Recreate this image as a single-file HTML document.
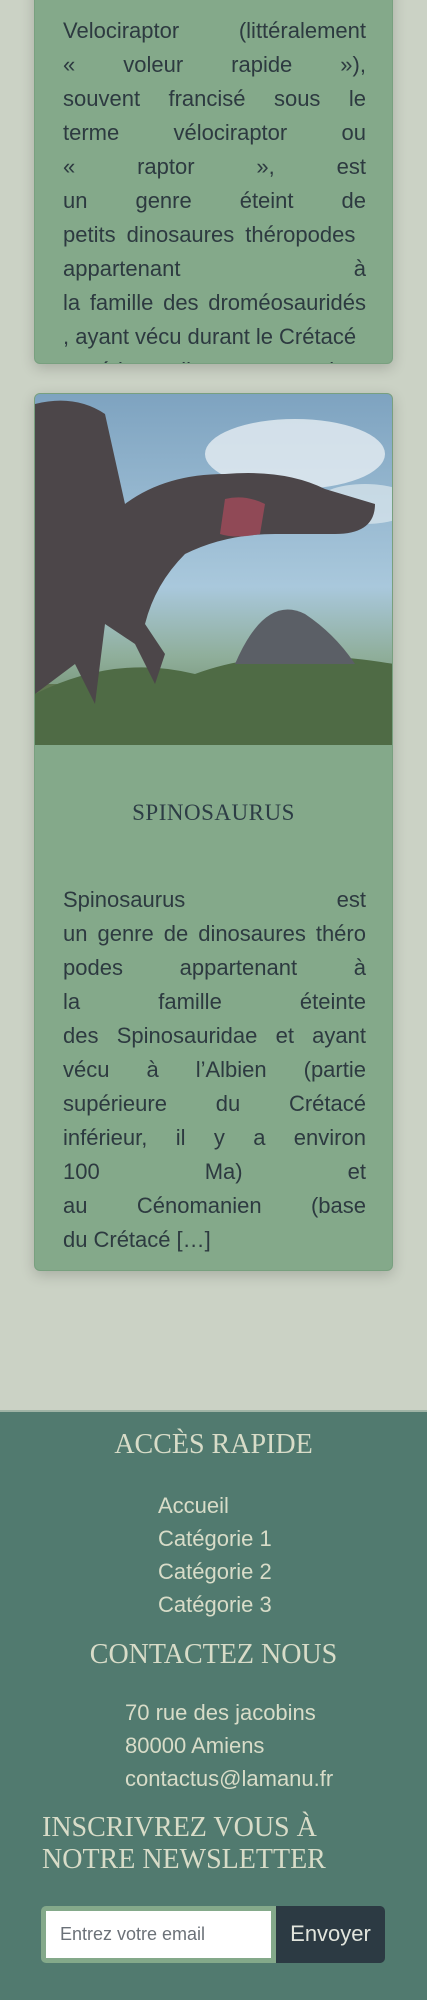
<!DOCTYPE html>
<html><head><meta charset="utf-8"><style>
*{margin:0;padding:0;box-sizing:border-box}
body{width:427px;height:2000px;background:#cbd2c5;font-family:"Liberation Sans",sans-serif;position:relative;overflow:hidden;color:#2d3a40}
.card{position:absolute;left:34px;width:359px;background:#84a98a;border:1px solid #78a07f;border-radius:6px;box-shadow:0 4px 14px rgba(0,0,0,.18);overflow:hidden}
.txt{position:absolute;left:28px;width:303px;font-size:22px;line-height:34px}
.txt div{white-space:nowrap;display:flex;justify-content:space-between}
.txt div.l{justify-content:flex-start;gap:11px}
.serif{font-family:"Liberation Serif",serif;letter-spacing:.5px}
footer{position:absolute;left:0;top:1410px;width:427px;height:590px;background:#517a6f;border-top:2px solid #9fb3a5;color:#d8dcc8}
footer h2{font-family:"Liberation Serif",serif;font-weight:normal;font-size:28px;position:absolute;white-space:nowrap;line-height:31px}
.lk{position:absolute;font-size:22px;line-height:33px}
</style></head><body>
<div class="card" style="top:-20px;height:384px">
 <div class="txt" style="top:33px">
  <div><span>Velociraptor</span><span>(littéralement</span></div>
  <div><span>«</span><span>voleur</span><span>rapide</span><span>»),</span></div>
  <div><span>souvent</span><span>francisé</span><span>sous</span><span>le</span></div>
  <div><span>terme</span><span>vélociraptor</span><span>ou</span></div>
  <div><span>«</span><span>raptor</span><span>»,</span><span>est</span></div>
  <div><span>un</span><span>genre</span><span>éteint</span><span>de</span></div>
  <div class="l"><span>petits</span><span>dinosaures</span><span>théropodes</span></div>
  <div><span>appartenant</span><span>à</span></div>
  <div><span>la</span><span>famille</span><span>des</span><span>droméosauridés</span></div>
  <div class="l" style="gap:6px"><span>, ayant</span><span>vécu</span><span>durant</span><span>le</span><span>Crétacé</span></div>
  <div><span>supérieur</span><span>il</span><span>y</span><span>a</span><span>environ</span></div>
 </div>
</div>
<div class="card" style="top:393px;height:878px">
 <svg width="359" height="351" viewBox="0 0 359 351" style="display:block">
  <defs><linearGradient id="s" x1="0" y1="0" x2="0" y2="1"><stop offset="0" stop-color="#7ea3c0"/><stop offset=".55" stop-color="#a9c8dc"/><stop offset=".75" stop-color="#8fae9a"/><stop offset="1" stop-color="#5e7a55"/></linearGradient></defs>
  <rect width="359" height="351" fill="url(#s)"/>
  <ellipse cx="260" cy="60" rx="90" ry="35" fill="#e6eef2" opacity=".8"/>
  <ellipse cx="330" cy="110" rx="50" ry="20" fill="#dde8ee" opacity=".7"/>
  <rect x="0" y="290" width="359" height="61" fill="#5f7550"/>
  <path d="M0 300 Q80 260 160 280 Q240 250 359 270 L359 351 L0 351Z" fill="#4f6b45"/>
  <path d="M200 270 Q230 200 270 220 Q300 240 320 270Z" fill="#5b5f66"/>
  <path d="M0 10 Q40 0 70 20 L90 110 Q130 80 190 80 Q250 75 290 95 L340 110 Q340 140 300 140 L240 140 Q190 140 150 160 Q120 190 110 230 L130 260 L120 290 L100 250 L70 230 L60 310 L40 270 L0 300Z" fill="#4c4649"/>
  <path d="M190 105 Q210 100 230 110 L225 140 Q200 145 185 140Z" fill="#a14a5a" opacity=".8"/>
 </svg>
 <div class="serif" style="position:absolute;top:406px;width:100%;text-align:center;font-size:23px;color:#2d3d45">SPINOSAURUS</div>
 <div class="txt" style="top:489px">
  <div><span>Spinosaurus</span><span>est</span></div>
  <div><span>un</span><span>genre</span><span>de</span><span>dinosaures</span><span>théro</span></div>
  <div><span>podes</span><span>appartenant</span><span>à</span></div>
  <div><span>la</span><span>famille</span><span>éteinte</span></div>
  <div><span>des</span><span>Spinosauridae</span><span>et</span><span>ayant</span></div>
  <div><span>vécu</span><span>à</span><span>l’Albien</span><span>(partie</span></div>
  <div><span>supérieure</span><span>du</span><span>Crétacé</span></div>
  <div><span>inférieur,</span><span>il</span><span>y</span><span>a</span><span>environ</span></div>
  <div><span>100</span><span>Ma)</span><span>et</span></div>
  <div><span>au</span><span>Cénomanien</span><span>(base</span></div>
  <div class="l" style="gap:6px"><span>du</span><span>Crétacé</span><span>[…]</span></div>
 </div>
</div>
<footer>
 <h2 style="top:17px;left:0;width:427px;text-align:center">ACCÈS RAPIDE</h2>
 <div class="lk" style="left:158px;top:77px">Accueil<br>Catégorie 1<br>Catégorie 2<br>Catégorie 3</div>
 <h2 style="top:227px;left:0;width:427px;text-align:center">CONTACTEZ NOUS</h2>
 <div class="lk" style="left:125px;top:284px">70 rue des jacobins<br>80000 Amiens<br>contactus@lamanu.fr</div>
 <h2 style="top:400px;left:42px;line-height:32px">INSCRIVREZ VOUS À<br>NOTRE NEWSLETTER</h2>
 <div style="position:absolute;left:41px;top:494px;width:235px;height:57px;background:#84a98a;border-radius:5px 0 0 5px;padding:5px">
  <div style="background:#fff;height:47px;font-size:18px;color:#6b7178;padding:13px 0 0 14px">Entrez votre email</div>
 </div>
 <div style="position:absolute;left:276px;top:494px;width:109px;height:57px;background:#2c3a43;border-radius:0 5px 5px 0;color:#e1e4dc;font-size:22px;text-align:center;line-height:55px">Envoyer</div>
</footer>
</body></html>
